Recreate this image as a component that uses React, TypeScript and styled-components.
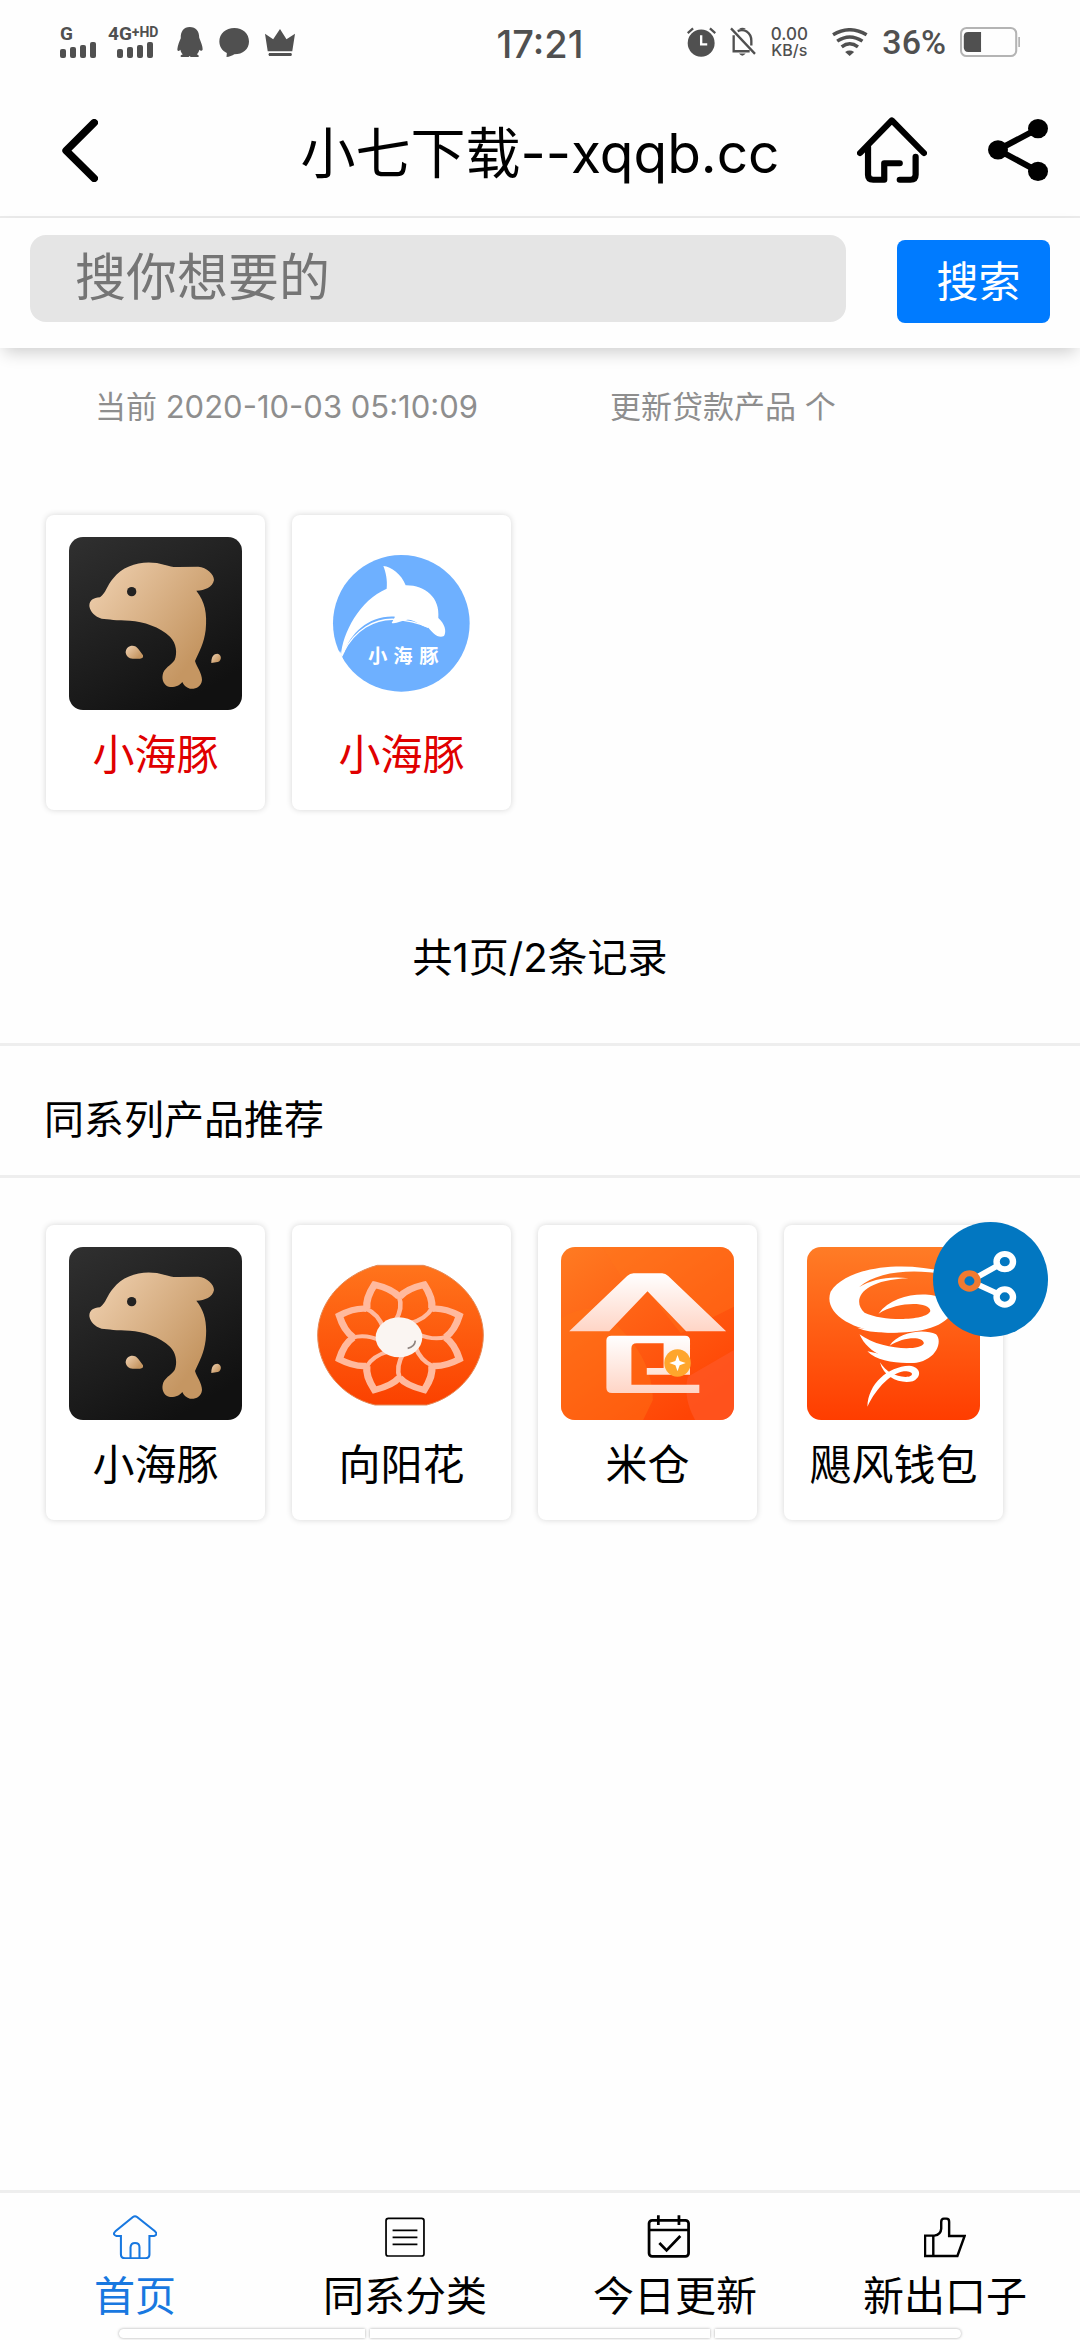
import React from "react";
import styled, { createGlobalStyle } from "styled-components";

const GlobalStyle = createGlobalStyle`
  *, *::before, *::after { box-sizing: border-box; }
  body {
    margin: 0;
    background: #fefefe;
    color: #000;
    font-family: Inter, "Noto Sans CJK SC", sans-serif;
  }
  button, input { font-family: inherit; }
`;

/* ---------- layout ---------- */

const Page = styled.div`
  display: flex;
  flex-direction: column;
  min-height: 100vh;
`;

const StatusBar = styled.div`
  display: grid;
  grid-template-columns: 1fr auto 1fr;
  align-items: center;
  height: 84px;
  padding: 0 60px;
  color: #505050;
`;

const StatusLeft = styled.div`
  display: flex;
  align-items: center;
  gap: 16px;
`;

const StatusRight = styled.div`
  display: flex;
  align-items: center;
  justify-content: flex-end;
  gap: 14px;
`;

const Signal = styled.div<{ $width: number }>`
  display: flex;
  flex-direction: column;
  align-items: flex-start;
  width: ${(p) => p.$width}px;
`;

const SignalLabel = styled.span`
  display: flex;
  height: 14px;
  font: 700 19px/14px Roboto, sans-serif;
  white-space: nowrap;
`;

const SignalSup = styled.span`
  font-size: 14px;
  line-height: 10px;
`;

const Bars = styled.span<{ $indent?: boolean }>`
  display: flex;
  align-items: flex-end;
  gap: 4px;
  height: 17px;
  margin-left: ${(p) => (p.$indent ? 9 : 0)}px;
`;

const Bar = styled.span<{ $h: number }>`
  width: 6px;
  height: ${(p) => p.$h}px;
  border-radius: 2px;
  background: currentColor;
`;

const Clock = styled.time`
  padding-top: 3px;
  font: 500 38px/40px Inter, sans-serif;
`;

const Speed = styled.div`
  display: flex;
  flex-direction: column;
  align-items: center;
  width: 38px;
  margin-right: 10px;
  font: 500 17px/16px Inter, sans-serif;
`;

const SpeedUnit = styled.span`
  font-size: 16px;
`;

const Percent = styled.span`
  font: 500 34px/40px Roboto, sans-serif;
`;

const Header = styled.header`
  display: grid;
  grid-template-columns: 1fr auto 1fr;
  align-items: center;
  height: 134px;
  padding: 0 32px;
  border-bottom: 2px solid #ebebeb;
`;

const IconButton = styled.button`
  display: flex;
  padding: 0;
  border: 0;
  background: none;
  color: inherit;
  cursor: pointer;
`;

const BackButton = styled(IconButton)`
  justify-self: start;
  padding-left: 30px;
`;

const Title = styled.h1`
  margin: 0;
  padding-top: 6px;
  font-size: 55px;
  font-weight: 400;
  line-height: 72px;
`;

const HeaderActions = styled.div`
  display: flex;
  align-items: center;
  justify-content: flex-end;
  gap: 61px;
`;

const SearchForm = styled.form`
  display: flex;
  gap: 51px;
  height: 130px;
  padding: 17px 30px 25px;
  box-shadow: 0 8px 16px -4px rgba(0, 0, 0, 0.2);
`;

const SearchInput = styled.input`
  flex: 1;
  min-width: 0;
  height: 87px;
  padding: 0 45px 2px;
  border: 0;
  border-radius: 16px;
  background: #e5e5e5;
  color: #333;
  font-size: 51px;
  outline: none;
  &::placeholder {
    color: #757575;
    opacity: 1;
  }
`;

const SearchButton = styled.button`
  align-self: flex-end;
  width: 153px;
  height: 83px;
  padding: 0 0 6px 10px;
  border: 0;
  border-radius: 8px;
  background: #007bff;
  color: #fff;
  font-size: 42px;
  cursor: pointer;
`;

const InfoRow = styled.div`
  display: grid;
  grid-template-columns: 515px 1fr;
  padding: 36px 95px 0;
  color: #8e8e8e;
  font-size: 31px;
  line-height: 46px;
`;

const Products = styled.section`
  position: relative;
  display: flex;
  flex-wrap: wrap;
  gap: 27px;
  padding: 47px 46px;
`;

const ResultProducts = styled(Products)`
  padding-top: 85px;
`;

const Card = styled.a`
  display: flex;
  flex-direction: column;
  align-items: center;
  width: 219px;
  height: 295px;
  padding-top: 22px;
  border-radius: 8px;
  background: #fff;
  box-shadow: 0 0 6px rgba(0, 0, 0, 0.16);
  text-decoration: none;
`;

const Logo = styled.svg`
  width: 173px;
  height: 173px;
  border-radius: 14px;
`;

const CardName = styled.span<{ $hot?: boolean }>`
  margin-top: 15px;
  color: ${(p) => (p.$hot ? "#e00000" : "#000")};
  font-size: 42px;
  line-height: 60px;
  white-space: nowrap;
`;

const Pagination = styled.p`
  margin: 71px 0 55px;
  font-size: 40px;
  line-height: 60px;
  text-align: center;
`;

const SectionTitle = styled.h2`
  margin: 0;
  padding: 43px 44px 25px;
  border: 3px solid #eee;
  border-width: 3px 0;
  font-size: 40px;
  font-weight: 400;
  line-height: 61px;
`;

const ShareFab = styled.button`
  position: absolute;
  top: 44px;
  right: 32px;
  width: 115px;
  height: 115px;
  padding: 0;
  border: 0;
  border-radius: 50%;
  background: #0277c1;
  cursor: pointer;
`;

const TabBar = styled.nav`
  position: sticky;
  bottom: 0;
  margin-top: auto;
  padding: 22px 0 2px;
  border-top: 3px solid #eee;
  background: #fefefe;
`;

const Tabs = styled.div`
  display: grid;
  grid-template-columns: repeat(4, 1fr);
`;

const Tab = styled.a<{ $active?: boolean }>`
  display: flex;
  flex-direction: column;
  align-items: center;
  gap: 7px;
  color: ${(p) => (p.$active ? "#1878e0" : "#000")};
  font-size: 41px;
  line-height: 60px;
  text-decoration: none;
`;

const Gestures = styled.div`
  display: grid;
  grid-template-columns: 246fr 340fr 246fr;
  gap: 5px;
  margin: 3px 119px 0;
`;

const Pill = styled.span`
  height: 9px;
  background: #fff;
  box-shadow: 0 0 3px rgba(0, 0, 0, 0.35);
  &:first-child { border-radius: 5px 0 0 5px; }
  &:last-child { border-radius: 0 5px 5px 0; }
`;

/* ---------- icons ---------- */

type IconProps = { w: number; h: number; box: string; children: React.ReactNode };

const Icon = ({ w, h, box, children }: IconProps) => (
  <svg width={w} height={h} viewBox={box} preserveAspectRatio="none" fill="none" aria-hidden="true">
    {children}
  </svg>
);

const PenguinIcon = () => (
  <Icon w={26} h={30} box="514 81 76 90">
    <path fill="currentColor" d="M551 81C570 81 579 94 579 113C584 126 589 138 589 148C588 155 583 152 579 149C578 155 575 160 572 163C580 167 579 171 575 171H554L551 168L548 171H527C523 170 523 166 531 163C527 159 525 155 524 149C519 154 515 154 515 148C516 137 521 125 525 115C524 94 534 81 551 81Z" />
  </Icon>
);

const BubbleIcon = () => (
  <Icon w={30} h={29} box="638 81 88 86">
    <path fill="currentColor" d="M683 81C708 81 726 98 726 121C726 144 708 159 683 159C677 163 668 167 660 167L661 155C647 148 639 136 639 121C639 98 658 81 683 81Z" />
  </Icon>
);

const CrownIcon = () => (
  <Icon w={30} h={27} box="769 82 88 80">
    <path fill="currentColor" d="M769 96L793 112L813 82L832 112L857 96L849 148H777ZM781 153H846Q850 157 846 162H781Q777 157 781 153Z" />
  </Icon>
);

const AlarmIcon = () => (
  <Icon w={29} h={30} box="428 84 86 88">
    <circle cx="470" cy="131" r="40" fill="currentColor" />
    <path d="M430 102L446 88M512 102L496 88" stroke="currentColor" strokeWidth="7" />
    <path d="M470 108V135H488" stroke="#fefefe" strokeWidth="7" />
  </Icon>
);

const MutedBellIcon = () => (
  <Icon w={26} h={30} box="553 84 78 88">
    <path d="M564 108V155H612M576 96Q590 90 603 97Q617 106 617 124V138M556 88L628 163" stroke="currentColor" strokeWidth="7" />
    <path d="M580 90Q590 82 601 90ZM580 162H600Q590 174 580 162Z" fill="currentColor" />
  </Icon>
);

const WifiIcon = () => (
  <Icon w={36} h={28} box="846 86 104 83">
    <path d="M849 106Q897 76 946 106M861 125Q897 100 934 125M874 142Q897 124 921 142" stroke="currentColor" strokeWidth="10" />
    <path d="M884 157Q897 149 910 157L897 169Z" fill="currentColor" />
  </Icon>
);

const BatteryIcon = () => (
  <Icon w={60} h={30} box="1220 81 174 90">
    <rect x="1223" y="84" width="160" height="84" rx="16" stroke="#b4b4b4" strokeWidth="6" />
    <rect x="1389" y="111" width="5" height="30" fill="#b4b4b4" />
    <path d="M1281 96H1244Q1231 96 1231 109V142Q1231 156 1244 156H1281Z" fill="currentColor" />
  </Icon>
);

const BackIcon = () => (
  <Icon w={36} h={63} box="180 355 104 189">
    <path d="M273 366L192 450L273 533" stroke="currentColor" strokeWidth="22" strokeLinecap="round" strokeLinejoin="round" />
  </Icon>
);

const HomeOutlineIcon = () => (
  <Icon w={70} h={66} box="918 351 203 198">
    <path
      d="M927 459L1019 361L1112 459M950 440V524Q950 539 965 539H997V490H1042M1088 470V524Q1088 539 1073 539H1042"
      stroke="currentColor"
      strokeWidth="18"
      strokeLinecap="round"
      strokeLinejoin="round"
    />
  </Icon>
);

const ShareIcon = () => (
  <Icon w={60} h={62} box="1298 357 174 187">
    <path d="M1443 386L1327 450L1443 515" stroke="currentColor" strokeWidth="18" />
    <g fill="currentColor">
      <circle cx="1327" cy="450" r="29" />
      <circle cx="1443" cy="386" r="29" />
      <circle cx="1443" cy="515" r="29" />
    </g>
  </Icon>
);

const FabShareIcon = () => (
  <Icon w={115} h={115} box="1156 65 322 345">
    <path d="M1357 184L1260 242L1357 290" stroke="#fff" strokeWidth="17" />
    <g fill="#0277c1" strokeWidth="18">
      <circle cx="1357" cy="184" r="23" stroke="#fff" />
      <circle cx="1357" cy="290" r="23" stroke="#fff" />
      <circle cx="1258" cy="242" r="23" stroke="#f07a30" />
    </g>
  </Icon>
);

const TabHomeIcon = () => (
  <Icon w={44} h={44} box="328 137 128 132">
    <path
      d="M351 200H338Q325 196 335 186L386 143Q392 138 398 143L450 186Q460 196 447 200H434V255Q434 267 422 267H363Q351 267 351 255ZM379 267V234Q380 221 392 221Q405 221 405 234V267"
      stroke="currentColor"
      strokeWidth="6"
    />
  </Icon>
);

const TabListIcon = () => (
  <Icon w={40} h={44} box="1119 137 116 132">
    <rect x="1122" y="147" width="110" height="113" rx="7" stroke="currentColor" strokeWidth="5" />
    <path d="M1141 183H1213M1141 204H1213M1141 225H1213" stroke="currentColor" strokeWidth="5" />
  </Icon>
);

const TabCalendarIcon = () => (
  <Icon w={56} h={44} box="312 131 163 132">
    <rect x="318" y="147" width="115" height="108" rx="9" stroke="currentColor" strokeWidth="8" />
    <path d="M318 176H433M345 132V161M405 132V161M348 215L369 237L409 194" stroke="currentColor" strokeWidth="8" />
  </Icon>
);

const TabThumbIcon = () => (
  <Icon w={42} h={44} box="1115 137 122 132">
    <path
      d="M1118 199H1145Q1164 196 1165 178V158Q1165 148 1173 148H1180Q1188 148 1188 157V200H1233L1212 260H1118ZM1142 199V260"
      stroke="currentColor"
      strokeWidth="7"
    />
  </Icon>
);

/* ---------- product logos ---------- */

const GoldDolphinLogo = () => (
  <Logo viewBox="117 111 519 519" role="img" aria-label="小海豚">
    <defs>
      <linearGradient id="night" x1="0" y1="0" x2="0.6" y2="1">
        <stop offset="0" stopColor="#303030" />
        <stop offset="1" stopColor="#111" />
      </linearGradient>
      <linearGradient id="gold" x1="0" y1="0.2" x2="0.8" y2="0.8">
        <stop offset="0" stopColor="#ecccaa" />
        <stop offset="1" stopColor="#c59662" />
      </linearGradient>
    </defs>
    <rect x="117" y="111" width="519" height="519" fill="url(#night)" />
    <g fill="url(#gold)">
      <path d="M178 318C178 300 190 294 210 292C228 280 230 257 250 235C285 190 350 178 405 195C420 199 430 202 445 201L505 200C530 202 552 222 552 240C548 262 525 271 499 272C525 305 532 340 527 390C522 430 508 455 495 483C500 500 516 520 516 540C514 562 495 568 480 566C468 562 460 555 457 546C450 556 435 562 420 561C402 558 395 540 398 525C400 505 425 495 434 480C442 460 440 430 420 410C390 380 340 365 300 362C260 361 235 358 215 356C195 350 180 335 178 318Z" />
      <path d="M287 458C287 435 315 430 325 447L339 466Q341 476 330 476H308Q290 475 287 458Z" />
      <path d="M544 489C543 470 552 461 562 461C576 464 576 482 563 486Z" />
    </g>
    <circle cx="305" cy="275" r="14" fill="#222" />
  </Logo>
);

const BlueDolphinLogo = () => (
  <Logo viewBox="856 111 519 519" role="img" aria-label="小海豚">
    <circle cx="1115" cy="370" r="205" fill="#6eb0ff" />
    <path
      fill="#fff"
      d="M934 466C938 400 990 300 1071 266C1074 240 1068 215 1061 198C1085 200 1115 222 1128 256C1185 255 1232 292 1226 354C1245 370 1252 395 1243 408C1225 417 1208 397 1196 383C1170 376 1148 354 1130 360C1115 362 1100 372 1086 369L1096 350C1020 345 962 400 945 455L938 470Z"
    />
    <path d="M942 456C975 390 1035 355 1095 358C1130 360 1160 366 1196 382M930 455Q938 485 955 505" fill="none" stroke="#fff" strokeWidth="4" />
    <text x="1015" y="490" fill="#fff" fontSize="58" fontWeight="700">小</text>
    <text x="1091" y="490" fill="#fff" fontSize="58" fontWeight="700">海</text>
    <text x="1169" y="490" fill="#fff" fontSize="58" fontWeight="700">豚</text>
  </Logo>
);

const PETALS = [0, 1, 2, 3, 4, 5, 6, 7];

const SunflowerLogo = () => (
  <Logo viewBox="855 141 519 519" role="img" aria-label="向阳花">
    <defs>
      <linearGradient id="sunset" x1="0" y1="0" x2="0" y2="1">
        <stop offset="0" stopColor="#ff741c" />
        <stop offset="1" stopColor="#fb4100" />
      </linearGradient>
    </defs>
    <path d="M1042 196H1180C1290 226 1360 315 1360 405C1360 500 1290 590 1190 615H1035C930 590 863 500 863 405C863 315 930 226 1042 196Z" fill="url(#sunset)" stroke="#e48a58" strokeWidth="3" />
    <g transform="translate(1108 412) scale(1.14 1)" fill="none" stroke="#ffb99d" strokeLinejoin="miter">
      {PETALS.map((i) => (
        <g key={i} transform={`rotate(${22.5 + i * 45})`}>
          <path strokeWidth="19" d="M-46 -112Q-38 -142 0 -171Q38 -142 46 -112" />
          <path strokeWidth="12" d="M46 -114Q44 -78 8 -48" />
        </g>
      ))}
    </g>
    <ellipse cx="1107" cy="412" rx="70" ry="60" fill="#faf5f2" />
    <path d="M1156 422Q1154 441 1133 445" fill="none" stroke="#8f8580" strokeWidth="5" />
  </Logo>
);

const BarnLogo = () => (
  <Logo viewBox="115 141 484 519" preserveAspectRatio="none" role="img" aria-label="米仓">
    <defs>
      <linearGradient id="barnBg" x1="0" y1="0" x2="0.7" y2="1">
        <stop offset="0" stopColor="#ff7b22" />
        <stop offset="1" stopColor="#ff4405" />
      </linearGradient>
      <linearGradient id="barnWall" x1="0" y1="0" x2="0" y2="1">
        <stop offset="0" stopColor="#fff" />
        <stop offset="1" stopColor="#ffd5c6" />
      </linearGradient>
    </defs>
    <rect x="115" y="141" width="484" height="519" fill="url(#barnBg)" />
    <path d="M115 355Q160 325 210 325Q370 440 372 600L345 660H115Z" fill="#ff7416" opacity="0.45" />
    <path d="M230 141H599V320L450 400L357 274L290 240Z" fill="#ff761c" opacity="0.4" />
    <path d="M599 450L470 530Q455 590 490 660H599Z" fill="#ff5826" opacity="0.7" />
    <path d="M138 394L300 228Q308 220 318 220H398Q407 220 415 228L577 394H465L357 274L250 394Z" fill="url(#barnWall)" />
    <path
      d="M242 421Q242 407 256 407H462Q476 407 476 421V524H355V504H402V430H327Q312 430 312 445V554H502V579H258Q242 579 242 563Z"
      fill="url(#barnWall)"
    />
    <ellipse cx="441" cy="489" rx="37" ry="41" fill="#ffa62c" />
    <path d="M441 465L447 483L464 489L447 496L441 514L435 496L418 489L435 483Z" fill="#fff" />
  </Logo>
);

const TornadoLogo = () => (
  <Logo viewBox="804 141 484 519" preserveAspectRatio="none" role="img" aria-label="飓风钱包">
    <defs>
      <linearGradient id="stormBg" x1="0" y1="0" x2="0" y2="1">
        <stop offset="0" stopColor="#ff7c26" />
        <stop offset="1" stopColor="#ff3d00" />
      </linearGradient>
    </defs>
    <rect x="804" y="141" width="484" height="519" fill="url(#stormBg)" />
    <g fill="#fff">
      <path d="M1190 216C1070 182 915 200 870 275C850 335 920 390 1030 398C1130 402 1205 375 1212 325C1200 270 1055 265 1004 341C1060 303 1148 305 1149 333C1140 362 1020 366 965 338C930 305 950 240 1088 235C1035 227 985 238 950 261C1000 215 1090 205 1190 222Z" />
      <path d="M944 383Q980 401 1060 397L1020 383Q980 388 944 383Z" />
      <path d="M951 403C975 465 1050 490 1110 488C1165 480 1185 425 1165 403C1130 385 1060 396 1035 437C1075 409 1130 408 1131 430C1120 455 1010 450 951 403Z" />
      <path d="M973 454C1000 485 1060 492 1110 488L1040 463Q1005 464 973 454Z" />
      <path d="M1008 487C1020 535 1065 552 1100 544C1127 530 1123 500 1090 497C1030 500 975 550 973 620C1000 560 1040 520 1075 514C1105 513 1104 531 1080 531C1050 530 1025 515 1008 487Z" />
    </g>
  </Logo>
);

/* ---------- data ---------- */

const results = [
  { id: "gold", name: "小海豚", logo: <GoldDolphinLogo /> },
  { id: "blue", name: "小海豚", logo: <BlueDolphinLogo /> },
];

const related = [
  { name: "小海豚", logo: <GoldDolphinLogo /> },
  { name: "向阳花", logo: <SunflowerLogo /> },
  { name: "米仓", logo: <BarnLogo /> },
  { name: "飓风钱包", logo: <TornadoLogo /> },
];

const tabs = [
  { name: "首页", icon: <TabHomeIcon />, active: true },
  { name: "同系分类", icon: <TabListIcon />, active: false },
  { name: "今日更新", icon: <TabCalendarIcon />, active: false },
  { name: "新出口子", icon: <TabThumbIcon />, active: false },
];

const signalBars = [9, 11, 13, 16];

export default function App() {
  return (
    <Page>
      <GlobalStyle />
      <StatusBar>
        <StatusLeft>
          <Signal $width={32}>
            <SignalLabel>G</SignalLabel>
            <Bars>{signalBars.map((h) => <Bar key={h} $h={h} />)}</Bars>
          </Signal>
          <Signal $width={53}>
            <SignalLabel>4G<SignalSup>+HD</SignalSup></SignalLabel>
            <Bars $indent>{signalBars.map((h) => <Bar key={h} $h={h} />)}</Bars>
          </Signal>
          <PenguinIcon />
          <BubbleIcon />
          <CrownIcon />
        </StatusLeft>
        <Clock>17:21</Clock>
        <StatusRight>
          <AlarmIcon />
          <MutedBellIcon />
          <Speed>
            <span>0.00</span>
            <SpeedUnit>KB/s</SpeedUnit>
          </Speed>
          <WifiIcon />
          <Percent>36%</Percent>
          <BatteryIcon />
        </StatusRight>
      </StatusBar>

      <Header>
        <BackButton type="button" aria-label="返回"><BackIcon /></BackButton>
        <Title>小七下载--xqqb.cc</Title>
        <HeaderActions>
          <IconButton type="button" aria-label="主页"><HomeOutlineIcon /></IconButton>
          <IconButton type="button" aria-label="分享"><ShareIcon /></IconButton>
        </HeaderActions>
      </Header>

      <SearchForm onSubmit={(e) => e.preventDefault()}>
        <SearchInput type="text" aria-label="搜索" placeholder="搜你想要的" />
        <SearchButton type="submit">搜索</SearchButton>
      </SearchForm>

      <InfoRow>
        <span>当前 2020-10-03 05:10:09</span>
        <span>更新贷款产品 个</span>
      </InfoRow>

      <ResultProducts>
        {results.map((p) => (
          <Card key={p.id} href="#">
            {p.logo}
            <CardName $hot>{p.name}</CardName>
          </Card>
        ))}
      </ResultProducts>

      <Pagination>共1页/2条记录</Pagination>

      <SectionTitle>同系列产品推荐</SectionTitle>
      <Products>
        {related.map((p) => (
          <Card key={p.name} href="#">
            {p.logo}
            <CardName>{p.name}</CardName>
          </Card>
        ))}
        <ShareFab type="button" aria-label="分享"><FabShareIcon /></ShareFab>
      </Products>

      <TabBar>
        <Tabs>
          {tabs.map((t) => (
            <Tab key={t.name} href="#" $active={t.active}>
              {t.icon}
              {t.name}
            </Tab>
          ))}
        </Tabs>
        <Gestures>
          <Pill />
          <Pill />
          <Pill />
        </Gestures>
      </TabBar>
    </Page>
  );
}
